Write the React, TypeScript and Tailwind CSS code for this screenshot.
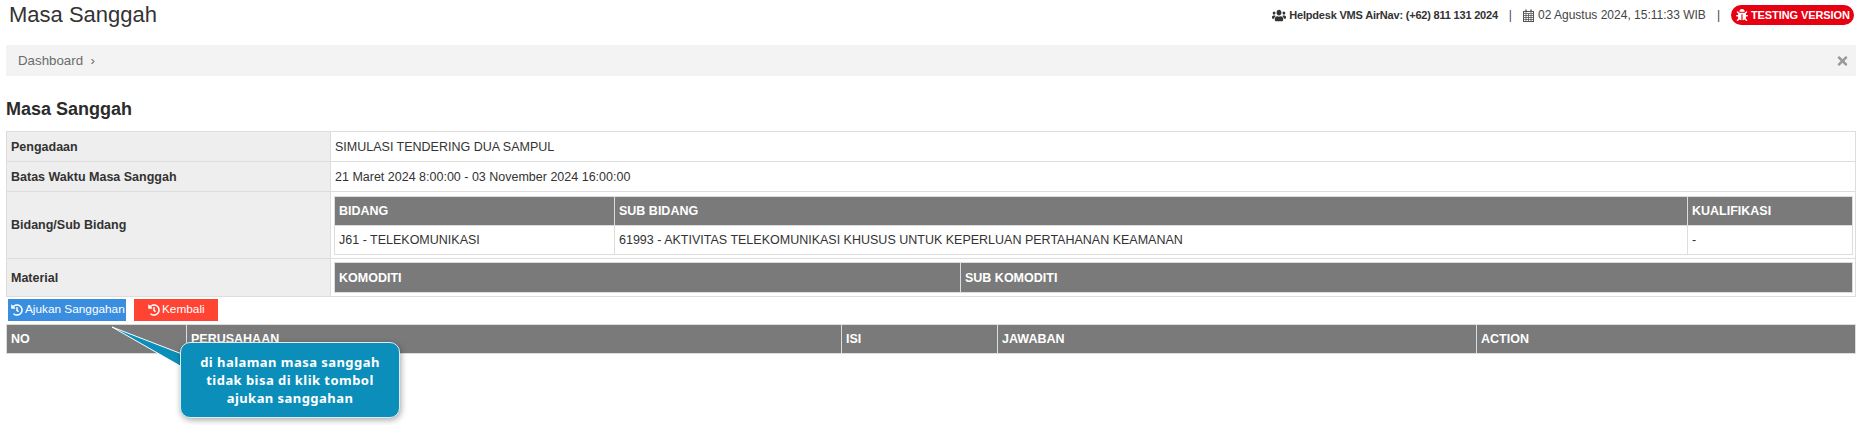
import React from "react";
import { FaUsers, FaBug, FaTimes, FaHistory } from "react-icons/fa";

const th = "bg-[#7a7a7a] text-white font-bold text-left align-middle px-[4px] pt-[1px] border border-[#dddddd] text-[12.5px]";
const td = "align-middle px-[4px] pt-[1px] border border-[#dddddd] text-[12.5px] text-[#333333]";
const label = "bg-[#eeeeee] font-bold align-middle px-[4px] pt-[1px] border border-[#dddddd] text-[12.5px] text-[#333333]";

function CalendarIcon() {
  return (
    <svg className="w-[11px] h-[13px] mr-[4px]" viewBox="0 0 11 13" fill="none" stroke="#555555" strokeWidth="1">
      <rect x="0.5" y="2.5" width="10" height="10" />
      <path d="M0.5 4.5h10M0.5 6.5h10M0.5 8.5h10M0.5 10.5h10M3 4.5v8M5.5 4.5v8M8 4.5v8" strokeWidth="0.8" />
      <path d="M3 0.5v3M8 0.5v3" strokeWidth="1.4" />
    </svg>
  );
}

export default function App() {
  return (
    <div className="relative w-[1861px] h-[425px] overflow-hidden bg-white font-['Liberation_Sans',Arial,sans-serif] text-[#333333]">
      <header className="flex justify-between items-start h-[45px]">
        <h1 className="ml-[9px] text-[22px] leading-[30px] text-[#333333]">Masa Sanggah</h1>
        <div className="flex items-center h-[20px] mt-[5px] mr-[7px] text-[12px] text-[#444444]">
          <FaUsers preserveAspectRatio="none" className="w-[14px] h-[13px] mr-[3px] text-[#333333]" />
          <span className="font-bold text-[11px] tracking-[-0.2px] text-[#333333]">Helpdesk VMS AirNav: (+62) 811 131 2024</span>
          <span className="mx-[11px]">|</span>
          <CalendarIcon />
          <span>02 Agustus 2024, 15:11:33 WIB</span>
          <span className="mx-[11px]">|</span>
          <span className="flex items-center h-[20px] w-[123px] pl-[5px] rounded-[10px] bg-[#e60012] text-white font-bold text-[11px] tracking-[-0.1px]">
            <FaBug className="w-[12px] h-[12px] mr-[3px]" />
            TESTING VERSION
          </span>
        </div>
      </header>

      <nav className="flex justify-between items-center h-[31px] ml-[6px] mr-[5px] pl-[12px] pr-[7px] pt-[1px] bg-[#f3f3f3] text-[13.3px] text-[#6b6b6b]">
        <span>Dashboard &nbsp;›</span>
        <FaTimes className="w-[13px] h-[14px] text-[#999999]" />
      </nav>

      <h2 className="ml-[6px] mt-[20px] text-[18px] leading-[26px] font-bold text-[#2b2b2b]">Masa Sanggah</h2>

      <main className="ml-[6px] mr-[5px] mt-[9px]">
        <table className="w-full table-fixed border-collapse">
          <colgroup>
            <col className="w-[324px]" />
            <col />
          </colgroup>
          <tbody>
            <tr className="h-[30px]">
              <td className={label}>Pengadaan</td>
              <td className={td}>SIMULASI TENDERING DUA SAMPUL</td>
            </tr>
            <tr className="h-[30px]">
              <td className={label}>Batas Waktu Masa Sanggah</td>
              <td className={td}>21 Maret 2024 8:00:00 - 03 November 2024 16:00:00</td>
            </tr>
            <tr className="h-[67px]">
              <td className={label}>Bidang/Sub Bidang</td>
              <td className="align-middle pl-[3px] pr-[2px] border border-[#dddddd]">
                <table className="w-full table-fixed border-collapse">
                  <colgroup>
                    <col className="w-[280px]" />
                    <col />
                    <col className="w-[165px]" />
                  </colgroup>
                  <thead>
                    <tr className="h-[29px]">
                      <th className={th}>BIDANG</th>
                      <th className={th}>SUB BIDANG</th>
                      <th className={th}>KUALIFIKASI</th>
                    </tr>
                  </thead>
                  <tbody>
                    <tr className="h-[29px]">
                      <td className={td}>J61 - TELEKOMUNIKASI</td>
                      <td className={td}>61993 - AKTIVITAS TELEKOMUNIKASI KHUSUS UNTUK KEPERLUAN PERTAHANAN KEAMANAN</td>
                      <td className={td}>-</td>
                    </tr>
                  </tbody>
                </table>
              </td>
            </tr>
            <tr className="h-[38px]">
              <td className={label}>Material</td>
              <td className="align-middle pl-[3px] pr-[2px] border border-[#dddddd]">
                <table className="w-full table-fixed border-collapse">
                  <thead>
                    <tr className="h-[30px]">
                      <th className={`${th} w-[626px]`}>KOMODITI</th>
                      <th className={th}>SUB KOMODITI</th>
                    </tr>
                  </thead>
                </table>
              </td>
            </tr>
          </tbody>
        </table>

        <div className="flex gap-[8px] ml-[2px] mt-[2px] mb-[3px]">
          <button className="flex items-center whitespace-nowrap h-[22px] w-[118px] pl-[3px] bg-[#3a8ee0] text-white text-[11.8px]">
            <FaHistory className="w-[12px] h-[12px] mr-[2px]" />
            Ajukan Sanggahan
          </button>
          <button className="flex items-center whitespace-nowrap h-[22px] w-[84px] pl-[14px] bg-[#ff4433] text-white text-[11.8px]">
            <FaHistory className="w-[12px] h-[12px] mr-[2px]" />
            Kembali
          </button>
        </div>

        <table className="w-full table-fixed border-collapse">
          <colgroup>
            <col className="w-[180px]" />
            <col className="w-[655px]" />
            <col className="w-[156px]" />
            <col className="w-[479px]" />
            <col />
          </colgroup>
          <thead>
            <tr className="h-[29px]">
              <th className={th}>NO</th>
              <th className={th}>PERUSAHAAN</th>
              <th className={th}>ISI</th>
              <th className={th}>JAWABAN</th>
              <th className={th}>ACTION</th>
            </tr>
          </thead>
        </table>
      </main>

      <svg className="absolute left-[110px] top-[325px] w-[74px] h-[46px]" viewBox="0 0 74 46">
        <polygon points="2,2 72,29 72,42" fill="#0b8fba" stroke="#ffffff" strokeWidth="1" />
      </svg>
      <div className="absolute left-[180px] top-[342px] w-[220px] h-[76px] flex items-center justify-center rounded-[10px] border border-[#d8eef5] bg-[#0b8fba] text-white text-center text-[13px] leading-[18px] font-bold tracking-[0.45px] shadow-[1px_2px_6px_rgba(0,0,0,0.35)] font-['Noto_Sans',sans-serif]">
        <p>
          di halaman masa sanggah
          <br />
          tidak bisa di klik tombol
          <br />
          ajukan sanggahan
        </p>
      </div>
    </div>
  );
}
